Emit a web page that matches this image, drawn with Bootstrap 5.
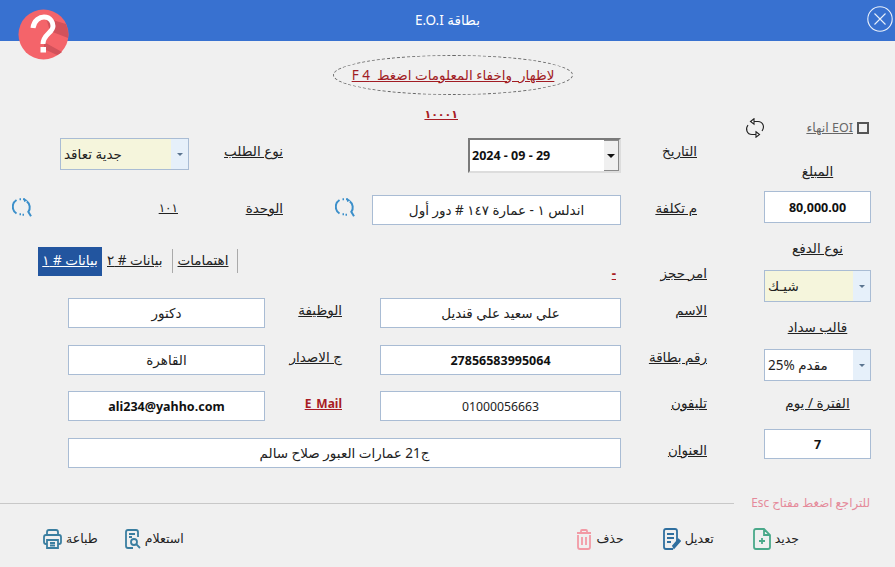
<!DOCTYPE html>
<html lang="ar" dir="rtl">
<head>
  <meta charset="UTF-8">
  <meta name="viewport" content="width=device-width, initial-scale=1.0">
  <title>بطاقة E.O.I</title>
  <link href="https://cdn.jsdelivr.net/npm/bootstrap@5.3.0/dist/css/bootstrap.min.css" rel="stylesheet">
  <style>
    body {
      background: #f0f0f0;
      color: #222;
      font-family: "Noto Sans", "DejaVu Sans", sans-serif;
      font-size: 13.5px;
      height: 567px;
      overflow: hidden;
      position: relative;
    }
    .win-head {
      background: #3871d0;
      color: #fff;
      height: 41px;
    }
    .win-close { position: absolute; top: 6px; right: 2px; width: 26px; height: 26px; }
    .win-logo { position: absolute; top: 9px; left: 18px; width: 51px; height: 51px; }

    .hint-oval {
      width: 240px;
      height: 40px;
      margin: 14px 322px 0 0;
      border: 1px dashed #666;
      border-radius: 50%;
      color: #a11c24;
      text-decoration: underline;
    }
    .serial {
      margin: 11px 437px 0 0;
      height: 16px;
      width: 30px;
      color: #a81c24;
      font-weight: 700;
      font-size: 11px;
      letter-spacing: -1.5px;
      text-decoration: underline;
      line-height: 16px;
    }

    .side-col { width: 107px; margin: -4px 24px 0 0; flex: none; }
    .main-col { width: 707px; margin-right: 57px; flex: none; }
    .form-body { height: 369px; }

    .u-label { text-decoration: underline; white-space: nowrap; }
    .lbl-line { line-height: 26px; }
    .eoi-line { height: 20px; margin-left: -19px; padding-right: 2px; color: #666; }
    .eoi-box { width: 12px; height: 12px; border: 2px solid #555; flex: none; }
    .eoi-text { font-size: 12.5px; }

    .side-label { text-align: center; line-height: 18px; margin-top: 16px; }
    .side-label.first { margin-top: 24px; }
    .side-label.last { margin-top: 13px; }
    .side-input { margin-top: 11px; }
    .side-input.last { margin-top: 17px; }
    .side-combo { margin-top: 13px; }

    .fld.form-control {
      height: 30px;
      min-height: 0;
      border: 1px solid #a9bcd4;
      border-radius: 0;
      background: #fff;
      color: #222;
      font-size: 13.5px;
      padding: 0 4px;
      text-align: center;
      box-shadow: none;
    }
    .fld.fld-num { font-size: 12.25px; }
    .fld.fld-bold { font-size: 12.5px; font-weight: 700; color: #111; }
    .fld.fld-tall { height: 32px; }

    .combo { height: 32px; width: 100%; flex-wrap: nowrap; direction: ltr; }
    .combo .form-control {
      height: 32px;
      min-height: 0;
      min-width: 0;
      border: 1px solid #a9bcd4;
      border-right: 0;
      border-radius: 0;
      background: #f5f5dc;
      font-size: 13.5px;
      color: #222;
      padding: 0 3px;
      text-align: left;
      box-shadow: none;
    }
    .combo .form-control.plain { background: #fff; }
    .combo .input-group-text {
      width: 18px;
      flex: none;
      padding: 0;
      justify-content: center;
      border: 1px solid #a9bcd4;
      border-left: 0;
      border-radius: 0;
      margin: 0 !important;
      background: #e6f0fa;
    }
    .caret-mini { width: 0; height: 0; border: 3px solid transparent; border-top: 3px solid #5b7590; border-bottom: 0; }

    .date-pick { height: 35px; width: 153px; flex-wrap: nowrap; direction: ltr; border: 2px solid #7a7a7a; border-right-color: #ddd; border-bottom-color: #ddd; background: #fff; }
    .date-pick .form-control {
      border: 0;
      border-radius: 0;
      background: #fff;
      height: 31px;
      min-height: 0;
      padding: 0 2px;
      font-size: 12.5px;
      font-weight: 700;
      color: #111;
      text-align: left;
      box-shadow: none;
    }
    .date-arrow { width: 16px; flex: none; background: #f0f0f0; border: 1px solid #8a8a8a; margin: 0; }
    .caret-dark { width: 0; height: 0; border: 4px solid transparent; border-top: 4px solid #111; border-bottom: 0; }

    .grid-top {
      display: grid;
      grid-template-columns: 86px 249px 89px 94px 129px 60px;
      row-gap: 22px;
      align-items: start;
      margin-top: 16px;
    }
    .lbl-in { padding-right: 10px; }
    .unit-no { padding-right: 11px; font-size: 12px; letter-spacing: -1.5px; }
    .find-ico { margin: 3px 17px 0 0; }
    .find-ico.far { margin-right: 28px; }

    .tab-line {
      display: grid;
      grid-template-columns: 86px 1fr auto;
      height: 29px;
      margin: 22px 0 0 38px;
      align-items: end;
    }
    .tab-line .u-label { line-height: 14px; margin-bottom: -4px; }
    .red-dash { color: #a81c24; font-weight: 700; text-decoration: underline; padding-right: 5px; line-height: 14px; margin-bottom: -4px; }
    .tab-bar { height: 29px; }
    .tab-bar .nav-link {
      color: #222;
      text-decoration: underline;
      white-space: nowrap;
      padding: 0 9px 0 5px;
      height: 29px;
      line-height: 27px;
      border-radius: 0;
    }
    .tab-bar .nav-link.active { background: #22559f; color: #fff; padding: 0; width: 64px; text-align: center; }
    .tab-sep { width: 1px; height: 24px; background: #aaa; margin-top: 2px; }

    .grid-fields {
      display: grid;
      grid-template-columns: 86px 241px 38px 77px 197px 68px;
      margin-top: 22px;
      align-items: center;
    }
    .grid-fields > .fld, .grid-fields > .u-label, .grid-fields > .mail-tag { margin-bottom: 17px; }
    .grid-fields > .u-label, .grid-fields > .mail-tag { align-self: start; line-height: 25px; }
    .grid-fields > .tight { margin-bottom: 16px; }
    .addr-span { grid-column: 2 / span 4; }
    .lbl-wide { grid-column: 3 / span 2; text-align: right; padding-right: 38px; }
    .mail-tag { grid-column: 3 / span 2; color: #a81c24; font-weight: 700; font-size: 12px; text-decoration: underline; padding-right: 38px; }

    .foot-line { height: 24px; }
    .esc-note { color: #e58a9a; font-size: 11.8px; margin-right: 25px; width: 119px; flex: none; white-space: nowrap; }
    .foot-rule { height: 1px; background: #c8c8c8; flex: 1; margin-right: 17px; margin-top: 1px; }

    .tool-bar { height: 30px; margin-top: 9px; padding: 0 96px 0 43px; }
    .tool-group { gap: 39px; }
    .tool-group.near { gap: 27px; }
    .tool-btn.btn {
      --bs-btn-padding-x: 0;
      --bs-btn-padding-y: 0;
      --bs-btn-border-width: 0;
      --bs-btn-font-size: 12.5px;
      --bs-btn-color: #222;
      display: flex;
      align-items: center;
      gap: 4px;
    }
  </style>
</head>
<body>
  <!-- title bar -->
  <div class="win-head d-flex align-items-center justify-content-center">بطاقة E.O.I</div>
  <svg class="win-close" viewBox="0 0 26 26" fill="none" stroke="#e9f0fb" stroke-width="1.1">
    <circle cx="13" cy="13" r="12.2"/>
    <path d="M7.500 7.500 18.500 18.500M18.500 7.500 7.500 18.500"/>
  </svg>
  <svg class="win-logo" viewBox="0 0 51 51">
    <circle cx="25.500" cy="25.500" r="25" fill="#f4646a"/>
    <path d="M28 9 48 15A25 25 0 0 1 50 29L32 22Z" fill="#d2525b"/>
    <path d="M26 33 44 43A25 25 0 0 1 39 46L26 40Z" fill="#d2525b"/>
    <path d="M15 19C16 11 22 8 26 8C33 8 35 14 35 17C35 24 25 25 25 35" fill="none" stroke="#fff" stroke-width="5"/>
    <rect x="22.500" y="38" width="5.500" height="5.500" fill="#fff"/>
  </svg>

  <!-- hint -->
  <div class="hint-oval d-flex align-items-center justify-content-center">لاظهار&nbsp; واخفاء المعلومات اضغط&nbsp; F 4</div>
  <div class="serial text-center">١٠٠٠١</div>

  <div class="form-body d-flex">
    <!-- right column -->
    <div class="side-col">
      <div class="eoi-line d-flex align-items-center justify-content-between">
        <div class="d-flex align-items-center gap-1">
          <span class="eoi-box"></span>
          <span class="u-label eoi-text">EOI انهاء</span>
        </div>
        <svg width="20" height="20" viewBox="0 0 20 20" fill="none" stroke="#222" stroke-width="1.1">
          <path d="M6 3.500H13C18 3.500 20 9 17 13"/>
          <path d="M14 16.500H7C2 16.500 0 11 3 7"/>
          <path d="M9 .8 5.500 3.500 9 6.200Z" fill="#fff"/>
          <path d="M11 13.800 14.500 16.500 11 19.200Z" fill="#fff"/>
        </svg>
      </div>
      <div class="side-label first u-label">المبلغ</div>
      <input class="form-control fld fld-bold fld-tall side-input" value="80,000.00" dir="ltr">
      <div class="side-label u-label">نوع الدفع</div>
      <div class="input-group combo side-combo">
        <input class="form-control" value="شيـك">
        <span class="input-group-text"><span class="caret-mini"></span></span>
      </div>
      <div class="side-label u-label">قالب سداد</div>
      <div class="input-group combo side-combo">
        <input class="form-control plain" value="25% مقدم">
        <span class="input-group-text"><span class="caret-mini"></span></span>
      </div>
      <div class="side-label last u-label">الفترة / يوم</div>
      <input class="form-control fld fld-bold side-input last" value="7">
    </div>

    <!-- main area -->
    <div class="main-col">
      <div class="grid-top">
        <span class="u-label lbl-in lbl-line">التاريخ</span>
        <div class="input-group date-pick">
          <input class="form-control" value="2024 - 09 - 29">
          <span class="date-arrow d-flex align-items-center justify-content-center"><span class="caret-dark"></span></span>
        </div>
        <span></span>
        <span class="u-label lbl-line">نوع الطلب</span>
        <div class="input-group combo">
          <input class="form-control" value="جدية تعاقد">
          <span class="input-group-text"><span class="caret-mini"></span></span>
        </div>
        <span></span>

        <span class="u-label lbl-in lbl-line">م تكلفة</span>
        <input class="form-control fld" value="اندلس ١ - عمارة ١٤٧ # دور أول">
        <svg class="find-ico" width="20" height="20" viewBox="0 0 20 20" fill="none" stroke="#3b8fca" stroke-width="2">
          <path d="M4.500 2A8 8 0 0 0 4.500 15.500"/>
          <path d="M14.800 3.400A7.500 7.500 0 0 1 16.300 13.800L19 18.300"/>
          <path d="M7.500 1.200H9M11 1.200H12.500M7.500 16.300H9M10.500 16.800H12"/>
          <path d="M12 0V4L15.500 2.500Z" fill="#3b8fca" stroke="none"/>
        </svg>
        <span class="u-label lbl-line">الوحدة</span>
        <span class="u-label lbl-line unit-no">١٠١</span>
        <svg class="find-ico far" width="20" height="20" viewBox="0 0 20 20" fill="none" stroke="#3b8fca" stroke-width="2">
          <path d="M4.500 2A8 8 0 0 0 4.500 15.500"/>
          <path d="M14.800 3.400A7.500 7.500 0 0 1 16.300 13.800L19 18.300"/>
          <path d="M7.500 1.200H9M11 1.200H12.500M7.500 16.300H9M10.500 16.800H12"/>
          <path d="M12 0V4L15.500 2.500Z" fill="#3b8fca" stroke="none"/>
        </svg>
      </div>

      <div class="tab-line">
        <span class="u-label">امر حجز</span>
        <span class="red-dash">-</span>
        <ul class="nav tab-bar flex-nowrap">
          <li class="tab-sep"></li>
          <li class="nav-item"><a class="nav-link" href="#">اهتمامات</a></li>
          <li class="tab-sep"></li>
          <li class="nav-item"><a class="nav-link" href="#">بيانات # ٢</a></li>
          <li class="nav-item"><a class="nav-link active" href="#">بيانات # ١</a></li>
        </ul>
      </div>

      <div class="grid-fields">
        <span class="u-label">الاسم</span>
        <input class="form-control fld" value="علي سعيد علي قنديل">
        <span class="u-label lbl-wide">الوظيفة</span>
        <input class="form-control fld" value="دكتور">
        <span></span>

        <span class="u-label tight">رقم بطاقة</span>
        <input class="form-control fld fld-bold tight" value="27856583995064">
        <span class="u-label lbl-wide tight">ج الاصدار</span>
        <input class="form-control fld tight" value="القاهرة">
        <span></span>

        <span class="u-label">تليفون</span>
        <input class="form-control fld fld-num" value="01000056663">
        <span class="mail-tag">E_Mail</span>
        <input class="form-control fld fld-bold" value="ali234@yahho.com">
        <span></span>

        <span class="u-label">العنوان</span>
        <input class="form-control fld addr-span" value="ج21 عمارات العبور صلاح سالم">
        <span></span>
      </div>
    </div>
  </div>

  <!-- footer -->
  <div class="foot-line d-flex align-items-center">
    <span class="esc-note">للتراجع اضغط مفتاح Esc</span>
    <div class="foot-rule"></div>
  </div>
  <div class="tool-bar d-flex align-items-center justify-content-between">
    <div class="tool-group d-flex">
      <button class="btn tool-btn">جديد
        <svg width="18" height="22" viewBox="0 0 18 22" fill="none" stroke="#4aa98a" stroke-width="1.800"><path d="M3 1H11L17 7V19Q17 21 15 21H3Q1 21 1 19V3Q1 1 3 1ZM11 1V7H17M9 10V16M6 13H12"/></svg>
      </button>
      <button class="btn tool-btn">تعديل
        <svg width="18" height="22" viewBox="0 0 18 22" fill="none" stroke="#2f6f9f" stroke-width="1.800"><path d="M14 15V3Q14 1 12 1H3Q1 1 1 3V19Q1 21 3 21H10M4 6H11M4 10H11M4 14H8"/><path d="M11 20 17 13 15.500 11.500 10 18Z" fill="#2f6f9f"/></svg>
      </button>
      <button class="btn tool-btn">حذف
        <svg width="16" height="21" viewBox="0 0 16 21" fill="none" stroke="#f29aa5" stroke-width="1.800"><path d="M1 4H15M5 4V2Q5 1 6 1H10Q11 1 11 2V4M2 6V18Q2 20 4 20H12Q14 20 14 18V6M6 8V16M10 8V16"/></svg>
      </button>
    </div>
    <div class="tool-group near d-flex">
      <button class="btn tool-btn">استعلام
        <svg width="16" height="20" viewBox="0 0 16 20" fill="none" stroke="#3a7ea0" stroke-width="1.800"><path d="M8 19H3Q1 19 1 17V3Q1 1 3 1H11Q13 1 13 3V8M4 5H10M4 8H7"/><circle cx="9" cy="13" r="3"/><path d="M11.200 15.200 15 19"/></svg>
      </button>
      <button class="btn tool-btn">طباعة
        <svg width="19" height="20" viewBox="0 0 19 20" fill="none" stroke="#3a7ea0" stroke-width="1.800"><path d="M4 6V3Q4 1 6 1H13Q15 1 15 3V6M4 15H3Q1 15 1 13V8Q1 6 3 6H16Q18 6 18 8V13Q18 15 16 15H15M4 11H15V19H4ZM7 14H12M7 16.500H12"/></svg>
      </button>
    </div>
  </div>

  <script src="https://cdn.jsdelivr.net/npm/bootstrap@5.3.0/dist/js/bootstrap.bundle.min.js"></script>
</body>
</html>
